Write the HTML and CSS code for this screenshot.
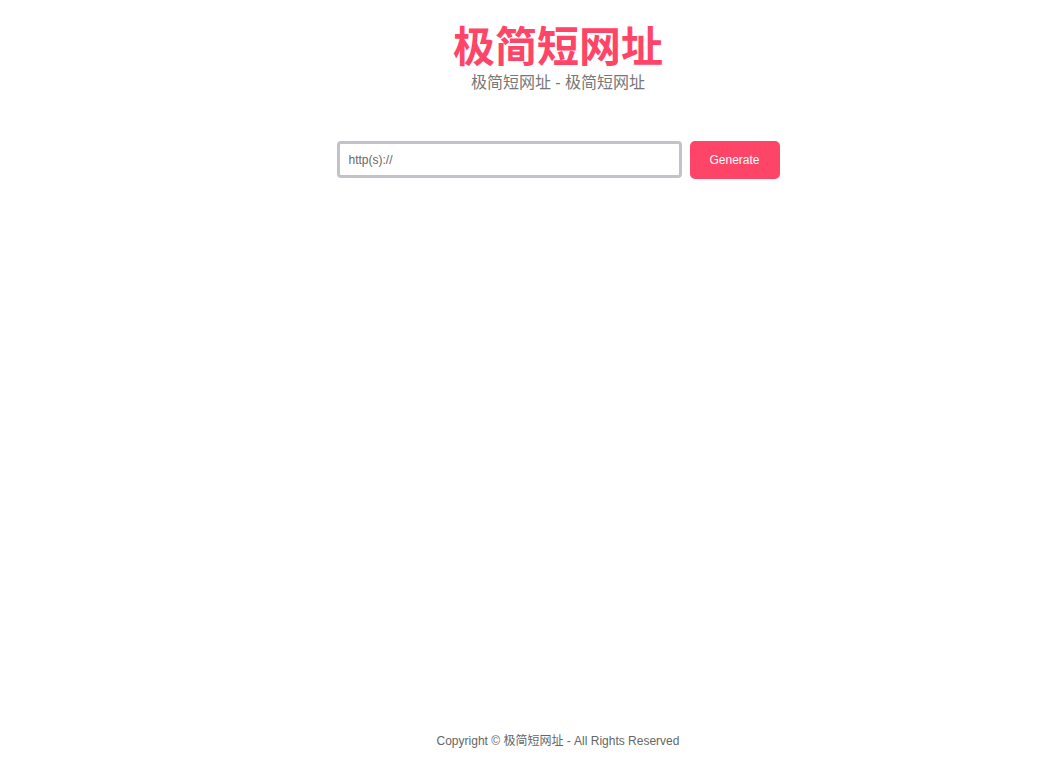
FILE: index.html
```html
<!DOCTYPE html>
<html lang="zh">
<head>
<meta charset="utf-8">
<title>极简短网址</title>
<link rel="stylesheet" href="styles.css">
</head>
<body>
<div class="page">
  <header class="header">
    <h1 class="title">极简短网址</h1>
    <p class="subtitle">极简短网址 - 极简短网址</p>
  </header>
  <form class="form">
    <input class="url-input" type="text" placeholder="http(s)://">
    <button class="btn" type="button">Generate</button>
  </form>
  <footer class="footer">Copyright © 极简短网址 - All Rights Reserved</footer>
</div>
</body>
</html>
```
FILE: styles.css
```css
html, body {
  margin: 0;
  padding: 0;
  background: #fff;
}
body {
  font-family: "Liberation Sans", Arial, "Noto Sans CJK SC", sans-serif;
}
.page {
  box-sizing: border-box;
  height: 758px;
  padding-left: 61px;
  display: flex;
  flex-direction: column;
  align-items: center;
}
.header {
  display: flex;
  flex-direction: column;
  align-items: center;
  margin-top: 18px;
}
.title {
  margin: 0;
  font-size: 42px;
  line-height: 52px;
  font-weight: 700;
  color: #ff4567;
  font-family: "Noto Sans CJK SC", sans-serif;
}
.subtitle {
  margin: 2px 0 0;
  font-size: 16px;
  line-height: 22px;
  color: #777;
  font-family: "Liberation Sans", "Noto Sans CJK SC", sans-serif;
}
.form {
  margin-top: 47px;
  display: flex;
  gap: 8px;
  align-items: flex-start;
}
.url-input {
  box-sizing: border-box;
  width: 345px;
  height: 37px;
  border: 3px solid #c0c4c9;
  border-radius: 4px;
  padding: 0 9px;
  font-size: 12px;
  font-family: "Liberation Sans", Arial, sans-serif;
  color: #333;
  outline: none;
  margin: 0;
}
.url-input::placeholder {
  color: #666;
}
.btn {
  box-sizing: border-box;
  width: 90px;
  height: 38px;
  border: none;
  border-radius: 5px;
  background: #ff4567;
  color: #fff;
  font-size: 12px;
  font-family: "Liberation Sans", Arial, sans-serif;
  margin: 0;
  padding: 0;
  cursor: pointer;
}
.footer {
  margin-top: auto;
  margin-bottom: 10px;
  font-size: 12px;
  line-height: 14px;
  color: #666;
  font-family: "Liberation Sans", Arial, "Noto Sans CJK SC", sans-serif;
}
```
